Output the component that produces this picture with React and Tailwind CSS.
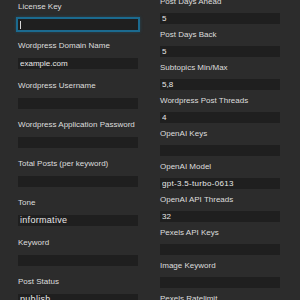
import React from "react";

const leftFields = [
  { label: "License Key", value: "", focused: true },
  { label: "Wordpress Domain Name", value: "example.com" },
  { label: "Wordpress Username", value: "" },
  { label: "Wordpress Application Password", value: "" },
  { label: "Total Posts (per keyword)", value: "" },
  { label: "Tone", value: "informative", select: "text-[9px] tracking-[0.3px]" },
  { label: "Keyword", value: "" },
  { label: "Post Status", value: "publish", select: "text-[9px] tracking-[0.3px]" },
];

const rightFields = [
  { label: "Post Days Ahead", value: "5" },
  { label: "Post Days Back", value: "5" },
  { label: "Subtopics Min/Max", value: "5,8" },
  { label: "Wordpress Post Threads", value: "4" },
  { label: "OpenAI Keys", value: "" },
  { label: "OpenAI Model", value: "gpt-3.5-turbo-0613", select: "text-[8px] tracking-[0.3px]" },
  { label: "OpenAI API Threads", value: "32" },
  { label: "Pexels API Keys", value: "" },
  { label: "Image Keyword", value: "" },
  { label: "Pexels Ratelimit", value: "" },
];

const Field = ({ label, value, focused, select, gap }) => (
  <label className="flex flex-col">
    <span className="block h-[10px] text-[8px] leading-[10px] text-[#dedede] whitespace-nowrap">{label}</span>
    <div className={`relative h-[11px] leading-[11px] ${gap}`}>
      <input
        readOnly
        value={value}
        className={`block w-full h-[11px] bg-[#1f1f1f] pl-[2px] leading-[11px] text-[#e8e8e8] outline-none border-0 ${
          select || "text-[8px]"
        } ${focused ? "shadow-[0_0_0_2px_#1b6a8f,0_0_3px_2px_rgba(27,106,143,0.45)]" : ""}`}
        style={{ fontFamily: "'Liberation Sans', Arial, sans-serif" }}
      />
      {focused && <span className="absolute left-[2px] top-[1.5px] h-[8px] w-px bg-[#d8d8d8]" />}
    </div>
  </label>
);

const App = () => {
  return (
    <div
      className="w-[300px] h-[300px] overflow-hidden bg-[#2c2c2c] flex gap-[22px] pl-[18px]"
      style={{ fontFamily: "'Liberation Sans', Arial, sans-serif" }}
    >
      {/* left column */}
      <div className="w-[120px] flex flex-col gap-[11.3px] pt-[2px]">
        {leftFields.map((f) => (
          <Field key={f.label} {...f} gap="mt-[7px]" />
        ))}
      </div>

      {/* right column */}
      <div className="w-[120px] flex flex-col gap-[6px] -mt-[3px]">
        {rightFields.map((f) => (
          <Field key={f.label} {...f} gap="mt-[6px]" />
        ))}
      </div>
    </div>
  );
};

export default App;
